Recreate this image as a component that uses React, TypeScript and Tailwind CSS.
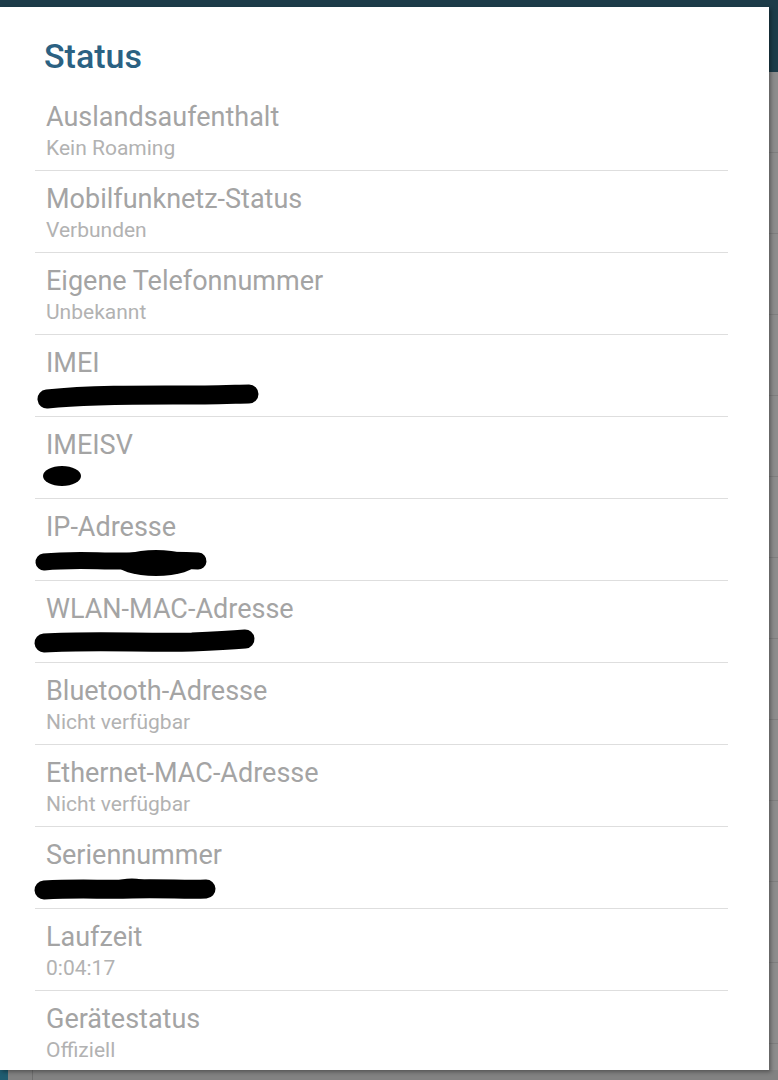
import React from "react";

type Row = { title: string; sub?: string; scribble?: "imei" | "imeisv" | "ip" | "wlan" | "serial" };

const rows: Row[] = [
  { title: "Auslandsaufenthalt", sub: "Kein Roaming" },
  { title: "Mobilfunknetz-Status", sub: "Verbunden" },
  { title: "Eigene Telefonnummer", sub: "Unbekannt" },
  { title: "IMEI", scribble: "imei" },
  { title: "IMEISV", scribble: "imeisv" },
  { title: "IP-Adresse", scribble: "ip" },
  { title: "WLAN-MAC-Adresse", scribble: "wlan" },
  { title: "Bluetooth-Adresse", sub: "Nicht verfügbar" },
  { title: "Ethernet-MAC-Adresse", sub: "Nicht verfügbar" },
  { title: "Seriennummer", scribble: "serial" },
  { title: "Laufzeit", sub: "0:04:17" },
  { title: "Gerätestatus", sub: "Offiziell" },
];

function Scribble({ kind }: { kind: NonNullable<Row["scribble"]> }) {
  if (kind === "imei")
    return (
      <svg width="230" height="30" className="-ml-[11px] block overflow-visible">
        <path d="M12 20 C60 15 120 16 170 16 C190 16 205 15 214 15" stroke="#000" strokeWidth="19" strokeLinecap="round" fill="none" />
      </svg>
    );
  if (kind === "imeisv")
    return (
      <svg width="60" height="30" className="-ml-[8px] block overflow-visible">
        <ellipse cx="24" cy="15" rx="19" ry="10" fill="#000" />
      </svg>
    );
  if (kind === "ip")
    return (
      <svg width="180" height="32" className="-ml-[14px] block overflow-visible">
        <path d="M12 20 C40 17 60 19 90 19 C115 19 140 17 166 19" stroke="#000" strokeWidth="17" strokeLinecap="round" fill="none" />
        <ellipse cx="124" cy="21" rx="40" ry="13" fill="#000" />
      </svg>
    );
  if (kind === "wlan")
    return (
      <svg width="230" height="30" className="-ml-[14px] block overflow-visible">
        <path d="M12 18 C60 15 110 18 160 17 C182 16 200 15 213 14" stroke="#000" strokeWidth="19" strokeLinecap="round" fill="none" />
      </svg>
    );
  return (
    <svg width="190" height="30" className="-ml-[14px] block overflow-visible">
      <path d="M12 19 C50 17 70 19 100 18 C130 17 155 19 174 18" stroke="#000" strokeWidth="19" strokeLinecap="round" fill="none" />
      <path d="M80 15 C95 10 108 11 118 15" stroke="#000" strokeWidth="8" strokeLinecap="round" fill="none" />
    </svg>
  );
}

export default function App() {
  return (
    <div
      className="relative w-[778px] h-[1080px] overflow-hidden bg-[#8d8d8d]"
      style={{ fontFamily: "Roboto, 'Noto Sans', sans-serif" }}
    >
      {/* background content behind dim */}
      <div className="flex flex-col">
        <div className="h-[72px] bg-[#1d3c49]" />
        <div className="flex flex-col">
          {[0, 1, 2, 3, 4, 5, 6, 7, 8, 9, 10, 11].map((i) => (
            <div key={i} className="h-[81px] border-b border-[#7f7f7f]" />
          ))}
        </div>
      </div>
      <div className="absolute left-0 right-0 bottom-0 h-[10px] bg-[#7c7c7c]/60" />
      <div className="absolute left-[32px] bottom-0 w-[1px] h-[10px] bg-[#6f6f6f]" />
      <div className="absolute left-0 bottom-0 w-[8px] h-[10px] bg-[#1f5c70]" />

      {/* dialog */}
      <div className="absolute left-0 top-[7px] w-[769px] h-[1063px] bg-white shadow-[2px_2px_4px_rgba(0,0,0,0.35)] flex flex-col overflow-hidden">
        <div className="h-[82px] shrink-0 pl-[44px] pt-[29px]">
          <div className="text-[34px] leading-[40px] font-medium text-[#2b6182]">Status</div>
        </div>
        <div className="flex-1 flex flex-col pl-[35px] pr-[41px]">
          {rows.map((r, i) => (
            <div
              key={r.title}
              className={
                "pl-[11px] pt-[11px] flex flex-col " +
                (i < rows.length - 1 ? "h-[82px] shrink-0 border-b border-[#dedede]" : "flex-1")
              }
            >
              <div className="text-[27px] leading-[34px] text-[#a4a4a4]">{r.title}</div>
              <div className="h-[28px] flex items-center">
                {r.scribble ? (
                  <Scribble kind={r.scribble} />
                ) : (
                  <span className="text-[21px] leading-[26px] text-[#b2b2b2]">{r.sub}</span>
                )}
              </div>
            </div>
          ))}
        </div>
      </div>
    </div>
  );
}
